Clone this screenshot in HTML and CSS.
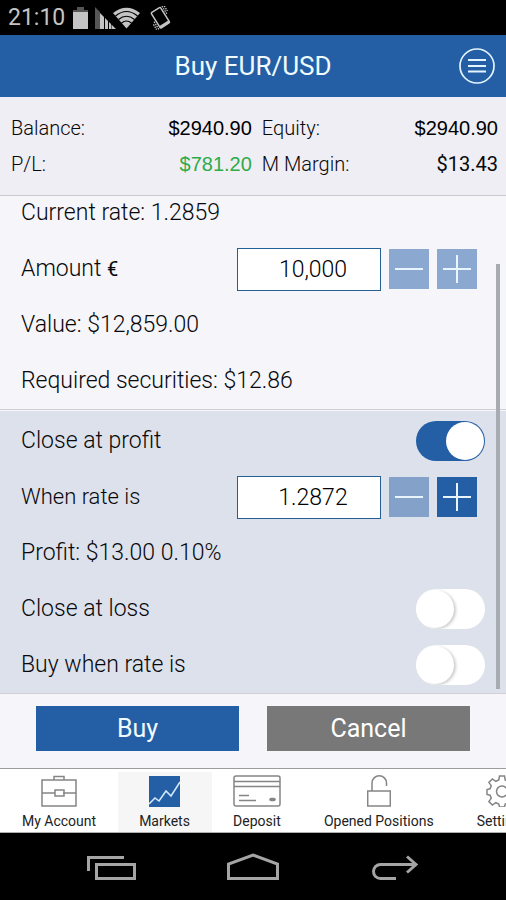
FILE: index.html
```html
<!DOCTYPE html>
<html lang="en">
<head>
<meta charset="utf-8">
<meta name="viewport" content="width=device-width, initial-scale=1">
<title>Buy EUR/USD</title>
<link rel="stylesheet" href="styles.css">
</head>
<body>
<div class="app">
  <div class="status">
    <span class="clock">21:10</span>
    <svg class="status-icons" width="100" height="24" viewBox="72 5 100 24" aria-hidden="true">
      <path fill="#555" d="M77 6h7v3h4v2H73V9h4z"/>
      <path fill="#c4c4c4" d="M73 11h15v17H73z"/>
      <path fill="#555" d="M95 6v22h5V11z"/>
      <path fill="#c4c4c4" d="M100 12l4 4v12h-4zM105 17l3 3v8h-3zM109 21l2 2v5h-2zM111.500 23.500l4.500 4.500h-4.500z"/>
      <path fill="#c4c4c4" d="M113 12Q126.500 1.500 140 12L126.500 27.500z"/>
      <g fill="none" stroke="#000" stroke-width="1.200">
        <path d="M115.500 15Q126.500 6 137.500 15"/>
        <path d="M118.500 18.500Q126.500 12 134.500 18.500"/>
        <path d="M121.500 22Q126.500 18 131.500 22"/>
      </g>
      <g transform="rotate(-32 160 17)">
        <rect x="155" y="8" width="11" height="18" rx="1" fill="none" stroke="#c4c4c4" stroke-width="1.500"/>
        <path d="M155 23.500h11v2.500h-11z" fill="#c4c4c4"/>
        <path d="M168 8v9M170 9v6M153 17v9M151 19v6" stroke="#c4c4c4" stroke-width="1.300" stroke-dasharray="1.500 1"/>
      </g>
    </svg>
  </div>

  <header class="header">
    <h1>Buy EUR/USD</h1>
    <button class="menu" type="button" aria-label="Menu">
      <svg width="36" height="36" viewBox="0 0 36 36" fill="none" stroke="#e4f4ff" aria-hidden="true">
        <circle cx="18" cy="18" r="17" stroke-width="1.700"/>
        <path d="M9 12h18M9 18h18M9 23.500h18" stroke-width="2"/>
      </svg>
    </button>
  </header>

  <dl class="summary">
    <div><dt>Balance:</dt><dd class="money">$2940.90</dd></div>
    <div><dt>Equity:</dt><dd class="money">$2940.90</dd></div>
    <div><dt>P/L:</dt><dd class="money gain">$781.20</dd></div>
    <div><dt>M Margin:</dt><dd>$13.43</dd></div>
  </dl>

  <main class="order">
    <section class="group">
      <div class="row">Current rate: 1.2859</div>
      <div class="row">
        <label for="amount">Amount <span class="currency">€</span></label>
        <div class="stepper">
          <input id="amount" type="text" value="10,000">
          <button class="faded" type="button" aria-label="Decrease amount"><svg width="40" height="40" viewBox="0 0 40 40"><path d="M6 20h28"/></svg></button>
          <button class="faded" type="button" aria-label="Increase amount"><svg width="40" height="40" viewBox="0 0 40 40"><path d="M6 20h28M20 6v28"/></svg></button>
        </div>
      </div>
      <div class="row">Value: $12,859.00</div>
      <div class="row">Required securities: $12.86</div>
    </section>
    <section class="group limits">
      <div class="row">
        <label for="profit">Close at profit</label>
        <input class="toggle" id="profit" type="checkbox" checked>
      </div>
      <div class="row">
        <label class="compact" for="rate">When rate is</label>
        <div class="stepper">
          <input id="rate" type="text" value="1.2872">
          <button class="faded" type="button" aria-label="Decrease rate"><svg width="40" height="40" viewBox="0 0 40 40"><path d="M6 20h28"/></svg></button>
          <button type="button" aria-label="Increase rate"><svg width="40" height="40" viewBox="0 0 40 40"><path d="M6 20h28M20 6v28"/></svg></button>
        </div>
      </div>
      <div class="row">Profit: $13.00 0.10%</div>
      <div class="row">
        <label for="loss">Close at loss</label>
        <input class="toggle" id="loss" type="checkbox">
      </div>
      <div class="row">
        <label for="when">Buy when rate is</label>
        <input class="toggle" id="when" type="checkbox">
      </div>
    </section>
    <div class="scrollbar"></div>
  </main>

  <div class="actions">
    <button class="buy" type="button">Buy</button>
    <button class="cancel" type="button">Cancel</button>
  </div>

  <nav class="tabs">
    <a href="#account">
      <svg width="36" height="32" viewBox="0 0 36 32"><path d="M1 5h34v26H1zM13 5V1.500h10V5M1 18h13M22 18h13M14 15h9v6h-9z"/></svg>
      My Account
    </a>
    <a class="active" href="#markets">
      <svg width="32" height="32" viewBox="0 0 32 32"><path class="tile" d="M0 1h31v31H0z"/><path class="chart" d="M0 29l6-6 4 3 7-10 5 5 9-14"/></svg>
      Markets
    </a>
    <a href="#deposit">
      <svg width="48" height="32" viewBox="0 0 48 32"><rect x="1" y="1" width="46" height="30" rx="2"/><path d="M1 6.500h46M1 11.500h46M6 20.500h10M6 25.500h17"/><path d="M38 24.500h3" stroke-width="3.500" stroke-linecap="round"/></svg>
      Deposit
    </a>
    <a href="#positions">
      <svg width="24" height="32" viewBox="0 0 24 32"><path d="M.7 16h22.600v15H.7zM5 16V8a7 7 0 0 1 14.500 0v3"/></svg>
      Opened Positions
    </a>
    <a href="#settings">
      <svg width="32" height="32" viewBox="0 0 32 32"><path d="M13.500 1h5l.7 4 3 1.300 3.400-2.400 3.500 3.500-2.400 3.400 1.300 3 3 .7v5l-3 .7-1.300 3 2.400 3.400-3.500 3.500-3.400-2.400-3 1.300-.7 3h-5l-.7-3-3-1.300-3.400 2.400-3.500-3.500 2.400-3.400-1.300-3-3-.7v-5l3-.7 1.300-3-2.400-3.400 3.500-3.500 3.400 2.400 3-1.300z"/><circle cx="16" cy="16.500" r="5.500"/></svg>
      Settings
    </a>
  </nav>

  <div class="system">
    <button type="button" aria-label="Recent apps"><svg width="52" height="28" viewBox="0 0 52 28"><path d="M3.500 18V4.500H39M11.500 11.500h38v14h-38z"/></svg></button>
    <button type="button" aria-label="Home"><svg width="52" height="28" viewBox="0 0 52 28"><path d="M1.500 25.500V11L26 2l24.500 9v14.500z"/></svg></button>
    <button type="button" aria-label="Back"><svg width="52" height="28" viewBox="0 0 52 28"><path d="M27 25.500H11.500a7 7 0 0 1-7-7 7 7 0 0 1 7-7H47M38 3.500l9 8-9 8"/></svg></button>
  </div>
</div>
</body>
</html>
```
FILE: styles.css
```css
* { box-sizing: border-box; }

body {
  margin: 0;
  background: #000;
  color: #08080a;
  font-family: Roboto, "Liberation Sans", sans-serif;
  font-size: 23px;
  line-height: 34px;
}

button, input { font: inherit; margin: 0; padding: 0; border: 0; border-radius: 0; }
svg { display: block; }

.app { display: flex; flex-direction: column; min-height: 100vh; overflow: hidden; }

.status {
  display: flex;
  align-items: center;
  gap: 7px;
  height: 35px;
  padding-left: 8px;
  color: #c4c4c4;
}

.header {
  display: grid;
  grid-template-columns: 1fr auto 1fr;
  align-items: center;
  height: 62px;
  padding: 0 11px;
  background: #245fa6;
  color: #f0fbff;
}
.header h1 { grid-column: 2; margin: 0; font-size: 26px; font-weight: 400; }
.menu { justify-self: end; background: none; }

.summary {
  display: grid;
  grid-template-columns: 51fr 50fr;
  column-gap: 10px;
  margin: 0;
  padding: 13px 8px 13px 11px;
  background: #efeef5;
  border-bottom: 1px solid #c9c9cd;
  font-size: 20px;
  line-height: 36px;
}
.summary div { display: flex; justify-content: space-between; }
.summary dt { font-weight: 300; }
.summary dd { margin: 0; }
.summary .money { font-family: "Liberation Sans", Arial, sans-serif; color: #000; }
.summary .gain { color: #2fab47; }

.order { position: relative; font-weight: 300; }
.group {
  display: flex;
  flex-direction: column;
  gap: 24px;
  padding: 1px 21px 12px;
  background: #f5f5fa;
  border-bottom: 1px solid #d0d0d6;
}
.limits { padding-top: 14px; background: #dde1ec; border-top: 1px solid #f5f5fa; }
.row { display: flex; justify-content: space-between; align-items: center; height: 32px; line-height: 34px; }
.currency { font-size: 20px; font-weight: 400; }
.compact { font-size: 22px; }

.stepper { display: flex; align-items: center; gap: 8px; margin-right: 8px; }
.stepper input {
  width: 144px;
  height: 43px;
  padding-left: 8px;
  background: #fff;
  border: 1px solid #245f96;
  color: #000;
  text-align: center;
}
.stepper button { background: #245fa6; }
.stepper .faded { background: #8aa8d0; }
.limits .stepper .faded { background: #84a1ca; }
.stepper svg { stroke: #e8f5ff; stroke-width: 2; }

.toggle {
  appearance: none;
  display: flex;
  width: 69px;
  height: 40px;
  border-radius: 20px;
  background: #fff;
  overflow: hidden;
}
.toggle::before {
  content: "";
  width: 38px;
  height: 38px;
  margin: 1px 0;
  border-radius: 50%;
  background: #fff;
  box-shadow: 2px 1px 3px #ccc;
}
.toggle:checked { justify-content: flex-end; padding-right: 1px; background: #245fa6; }
.toggle:checked::before { box-shadow: none; }

.scrollbar {
  position: absolute;
  top: 68px;
  bottom: 5px;
  right: 6px;
  width: 4px;
  background: #a9abb3;
}

.actions {
  display: flex;
  gap: 28px;
  padding: 12px 36px 17px;
  background: #f5f5fa;
}
.actions button { flex: 1; height: 45px; font-size: 25px; }
.buy { background: #245fa6; color: #f0fbff; }
.cancel { background: #787878; color: #fff; }

.tabs {
  display: flex;
  height: 65px;
  padding: 3px 0 0 1px;
  overflow: hidden;
  background: #fff;
  border-top: 1px solid #9c9c9f;
  border-bottom: 1px solid #b0b0b0;
}
.tabs a {
  display: flex;
  flex: none;
  flex-direction: column;
  align-items: center;
  gap: 4px;
  padding: 3px 22px 0 21px;
  color: #222;
  font-size: 14px;
  line-height: 20px;
  text-decoration: none;
  white-space: nowrap;
}
.tabs .active { background: #f6f6f6; }
.tabs svg { fill: none; stroke: #858585; stroke-width: 1.5; }
.tabs .tile { fill: #245fa6; stroke: none; }
.tabs .chart { stroke: #d5ebff; }

.system {
  display: flex;
  flex: 1;
  justify-content: center;
  align-items: center;
  gap: 90px;
  min-height: 67px;
}
.system button { background: none; }
.system svg { fill: none; stroke: #a5a5a5; stroke-width: 3; }
```
